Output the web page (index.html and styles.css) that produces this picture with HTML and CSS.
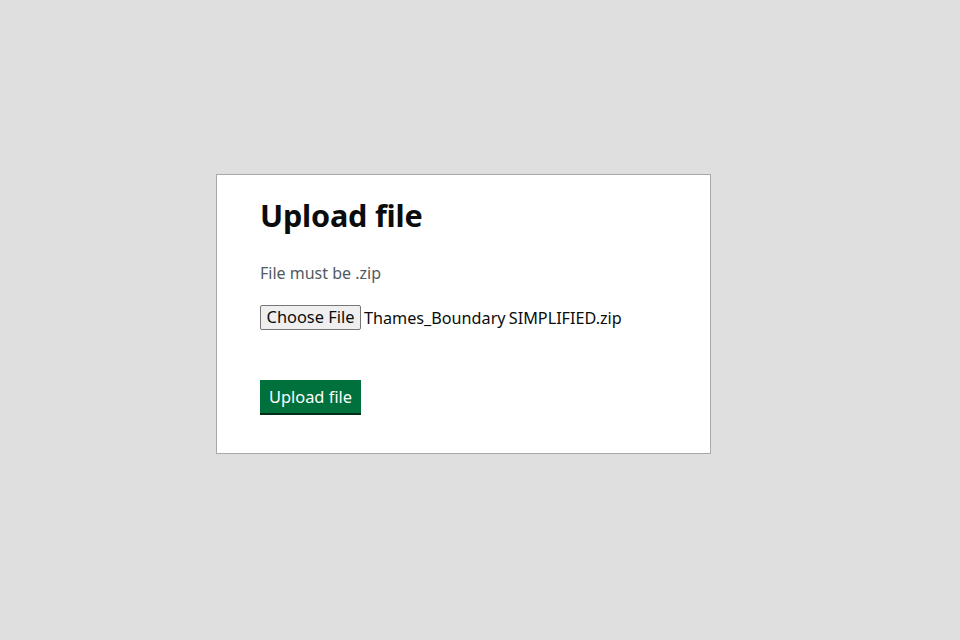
FILE: index.html
```html
<!DOCTYPE html>
<html lang="en">
<head>
<meta charset="utf-8">
<title>Upload file</title>
<link rel="stylesheet" href="styles.css">
</head>
<body>
<main class="page">
  <section class="card">
    <h1 class="title">Upload file</h1>
    <p class="hint">File must be .zip</p>
    <div class="file-row">
      <span class="choose">Choose File</span>
      <span class="file-name">Thames_Boundary SIMPLIFIED.zip</span>
    </div>
    <button class="submit" type="button">Upload file</button>
  </section>
</main>
</body>
</html>
```

FILE: styles.css
```css
html, body {
  margin: 0;
  padding: 0;
  height: 100%;
}
body {
  background: #dfdfdf;
  font-family: "Noto Sans", "Liberation Sans", sans-serif;
  color: #0b0c0c;
}
.page {
  display: flex;
  justify-content: flex-start;
  padding: 174px 0 0 216px;
}
.card {
  box-sizing: border-box;
  width: 495px;
  height: 280px;
  background: #fff;
  border: 1px solid #a8a8a8;
  padding: 18px 43px 0;
  display: flex;
  flex-direction: column;
  align-items: flex-start;
}
.title {
  margin: 0;
  font-size: 30.6px;
  font-weight: 700;
  line-height: 44px;
  letter-spacing: -0.2px;
}
.hint {
  margin: 24px 0 0;
  font-size: 16px;
  line-height: 24px;
  color: #505a5f;
}
.file-row {
  margin-top: 20px;
  display: flex;
  align-items: center;
  gap: 3px;
  font-size: 16.4px;
}
.choose {
  box-sizing: border-box;
  width: 101px;
  height: 25px;
  padding: 0 5px;
  border: 1px solid #767676;
  border-radius: 2px;
  background: #efefef;
  line-height: 22px;
  text-align: center;
}
.file-name {
  font-size: 16.2px;
  line-height: 24px;
  word-spacing: -1px;
}
.submit {
  margin-top: 50px;
  box-sizing: border-box;
  width: 101px;
  height: 33px;
  padding: 0;
  border: 0;
  border-radius: 0;
  background: #00703c;
  box-shadow: 0 2px 0 #002d18;
  color: #fff;
  font-family: inherit;
  font-size: 16.4px;
  line-height: 33px;
  text-align: center;
}
```
